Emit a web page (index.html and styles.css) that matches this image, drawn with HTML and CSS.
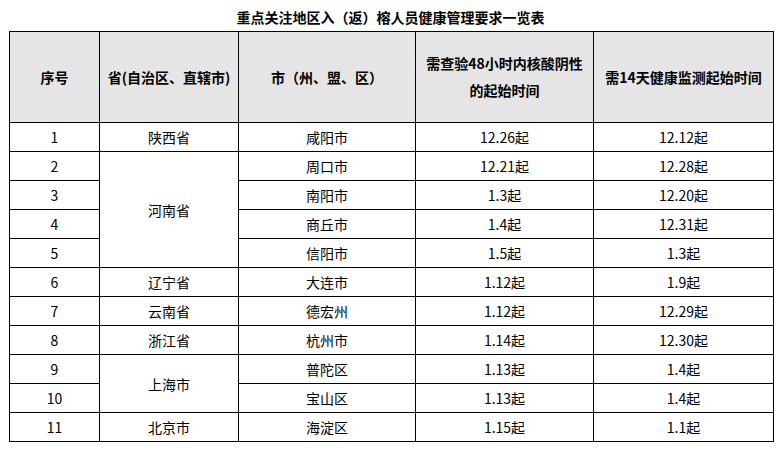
FILE: index.html
```html
<!DOCTYPE html>
<html lang="zh-CN">
<head>
<meta charset="utf-8">
<link rel="stylesheet" href="styles.css">
</head>
<body>
<div class="page">
  <div class="title">重点关注地区入（返）榕人员健康管理要求一览表</div>
  <table class="tbl">
    <colgroup>
      <col class="c1"><col class="c2"><col class="c3"><col class="c4"><col class="c5">
    </colgroup>
    <thead>
      <tr class="head">
        <th>序号</th>
        <th>省(自治区、直辖市)</th>
        <th>市（州、盟、区）</th>
        <th class="wrap">需查验48小时内核酸阴性的起始时间</th>
        <th>需14天健康监测起始时间</th>
      </tr>
    </thead>
    <tbody>
      <tr><td>1</td><td>陕西省</td><td>咸阳市</td><td>12.26起</td><td>12.12起</td></tr>
      <tr><td>2</td><td rowspan="4">河南省</td><td>周口市</td><td>12.21起</td><td>12.28起</td></tr>
      <tr><td>3</td><td>南阳市</td><td>1.3起</td><td>12.20起</td></tr>
      <tr><td>4</td><td>商丘市</td><td>1.4起</td><td>12.31起</td></tr>
      <tr><td>5</td><td>信阳市</td><td>1.5起</td><td>1.3起</td></tr>
      <tr><td>6</td><td>辽宁省</td><td>大连市</td><td>1.12起</td><td>1.9起</td></tr>
      <tr><td>7</td><td>云南省</td><td>德宏州</td><td>1.12起</td><td>12.29起</td></tr>
      <tr><td>8</td><td>浙江省</td><td>杭州市</td><td>1.14起</td><td>12.30起</td></tr>
      <tr><td>9</td><td rowspan="2">上海市</td><td>普陀区</td><td>1.13起</td><td>1.4起</td></tr>
      <tr><td>10</td><td>宝山区</td><td>1.13起</td><td>1.4起</td></tr>
      <tr><td>11</td><td>北京市</td><td>海淀区</td><td>1.15起</td><td>1.1起</td></tr>
    </tbody>
  </table>
</div>
</body>
</html>
```

FILE: styles.css
```css
html, body {
  margin: 0;
  padding: 0;
  background: #ffffff;
}
body {
  font-family: "Noto Sans CJK SC", "Microsoft YaHei", sans-serif;
  color: #000000;
}
.page {
  width: 779px;
}
.title {
  padding-top: 4px;
  height: 27px;
  line-height: 27px;
  font-size: 14px;
  font-weight: bold;
  text-align: center;
  width: 781px;
}
.tbl {
  margin-left: 9px;
  border-collapse: collapse;
  table-layout: fixed;
  width: 764px;
}
.c1 { width: 90px; }
.c2 { width: 139px; }
.c3 { width: 177px; }
.c4 { width: 178px; }
.c5 { width: 180px; }
.tbl th,
.tbl td {
  border: 1px solid #000000;
  text-align: center;
  vertical-align: middle;
  padding: 0;
  font-size: 14px;
}
.tbl th {
  background: #e5e5e5;
  font-weight: bold;
  line-height: 27px;
}
.head {
  height: 91px;
}
.tbl th.wrap {
  padding: 0 10px;
}
.tbl td {
  height: 28px;
  line-height: 20px;
}
```
